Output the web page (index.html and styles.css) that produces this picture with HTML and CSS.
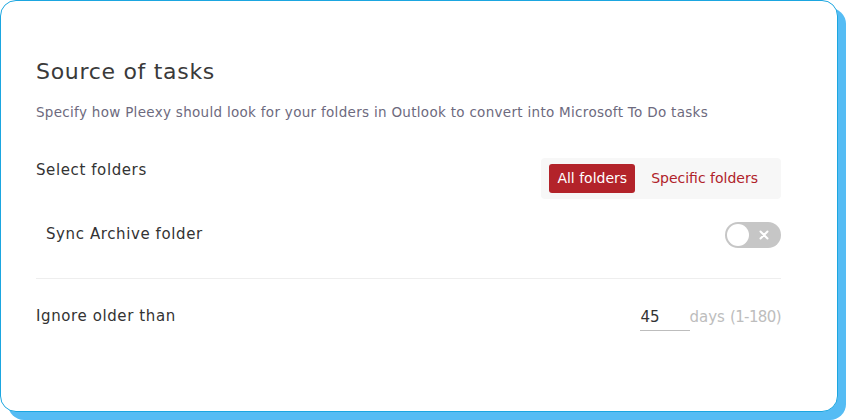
FILE: index.html
```html
<!DOCTYPE html>
<html>
<head>
<meta charset="utf-8">
<link rel="stylesheet" href="styles.css">
</head>
<body>
<div class="card">
  <h1 class="title">Source of tasks</h1>
  <p class="desc">Specify how Pleexy should look for your folders in Outlook to convert into Microsoft To Do tasks</p>

  <div class="row row-select">
    <div class="label">Select folders</div>
    <div class="segmented">
      <span class="seg seg-active">All folders</span>
      <span class="seg">Specific folders</span>
    </div>
  </div>

  <div class="row row-sync">
    <div class="label label-sub">Sync Archive folder</div>
    <div class="toggle">
      <span class="knob"></span>
      <svg class="toggle-x" width="10" height="10" viewBox="0 0 10 10"><path d="M1.5 1.5 L8.5 8.5 M8.5 1.5 L1.5 8.5" stroke="#fff" stroke-width="2" stroke-linecap="round"/></svg>
    </div>
  </div>

  <div class="divider"></div>

  <div class="row row-ignore">
    <div class="label">Ignore older than</div>
    <div class="days">
      <span class="num-input">45</span>
      <span class="unit">days</span>
      <span class="range">(1-180)</span>
    </div>
  </div>
</div>
</body>
</html>
```

FILE: styles.css
```css
html, body {
  margin: 0;
  padding: 0;
  background: #ffffff;
}
body {
  font-family: "DejaVu Sans", "Open Sans", sans-serif;
  color: #333333;
  padding-bottom: 8px;
}
.card {
  box-sizing: border-box;
  width: 838px;
  height: 412px;
  border: 1px solid #1ba6e0;
  border-radius: 16px;
  background: #ffffff;
  box-shadow: 8px 8px 0 #55bcf4;
  padding: 56px 56px 0 35px;
}
.title {
  margin: 0;
  font-size: 22px;
  line-height: 30px;
  font-weight: 400;
  letter-spacing: 0.7px;
  color: #3a3a3a;
}
.desc {
  margin: 15px 0 0 0;
  font-size: 13.5px;
  line-height: 20px;
  letter-spacing: 0.3px;
  color: #6d6a7e;
}
.row {
  display: flex;
  justify-content: space-between;
}
.label {
  font-size: 15px;
  line-height: 20px;
  font-weight: 400;
  letter-spacing: 0.6px;
  color: #333333;
}
.label-sub {
  padding-left: 10px;
}
.row-select {
  margin-top: 36px;
  align-items: flex-start;
}
.row-select .label {
  margin-top: 2px;
}
.segmented {
  display: flex;
  gap: 8px;
  background: #f7f7f7;
  border-radius: 4px;
  padding: 6px 15px 6px 8px;
}
.seg {
  font-size: 14px;
  line-height: 29px;
  font-weight: 400;
  color: #b0222a;
  padding: 0 8px;
  border-radius: 3px;
}
.seg-active {
  background: #b3232a;
  color: #ffffff;
}
.row-sync {
  margin-top: 23px;
  align-items: center;
}
.row-sync .label {
  margin-top: -3px;
}
.toggle {
  display: flex;
  align-items: center;
  width: 56px;
  height: 26px;
  box-sizing: border-box;
  padding: 2px;
  border-radius: 13px;
  background: #c6c6c6;
}
.knob {
  width: 22px;
  height: 22px;
  border-radius: 50%;
  background: #ffffff;
}
.toggle-x {
  margin-left: 10px;
}
.divider {
  margin-top: 30px;
  height: 1px;
  background: #eeeeee;
}
.row-ignore {
  margin-top: 26px;
  align-items: flex-start;
}
.row-ignore .label {
  margin-top: 1px;
}
.days {
  display: flex;
  align-items: flex-end;
  margin-top: 2px;
  font-size: 15px;
  line-height: 20px;
  color: #bdbdbd;
}
.num-input {
  width: 49px;
  padding-left: 1px;
  border-bottom: 1px solid #bdbdbd;
  padding-bottom: 3px;
  color: #333333;
}
.unit {
  padding-bottom: 4px;
}
.range {
  margin-left: 5px;
  padding-bottom: 4px;
  letter-spacing: -0.6px;
}
```
